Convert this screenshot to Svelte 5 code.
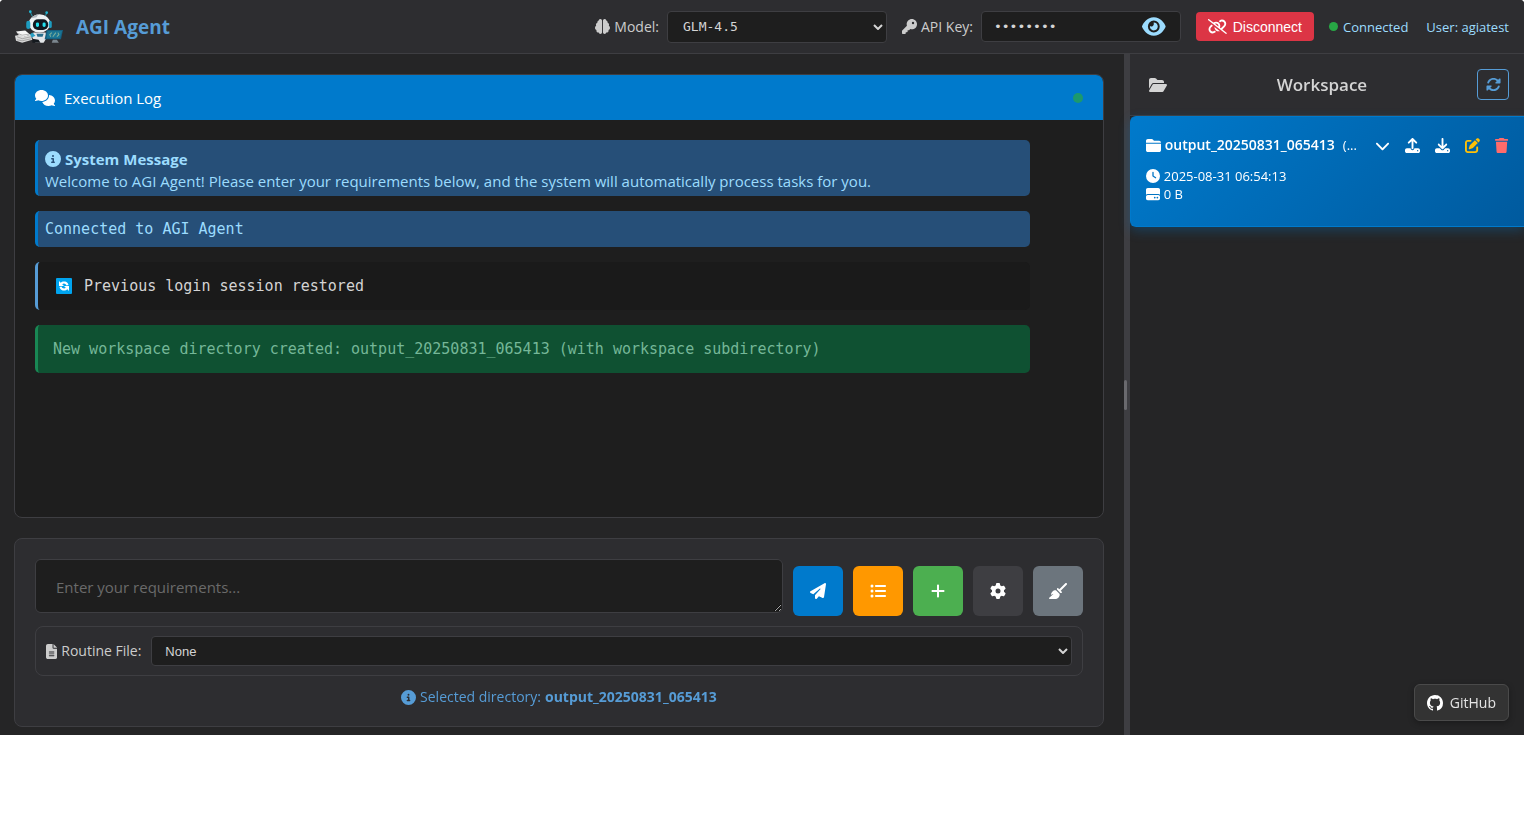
<script>
  const icons = {
    brain: [512, 'M184 0c30.9 0 56 25.1 56 56V456c0 30.9-25.1 56-56 56c-28.9 0-52.7-21.9-55.7-50.1c-5.2 1.4-10.7 2.1-16.3 2.1c-35.3 0-64-28.7-64-64c0-7.4 1.3-14.6 3.6-21.2C21.4 367.4 0 338.2 0 304c0-31.9 18.7-59.5 45.8-72.3C37.1 220.8 32 207 32 192c0-30.7 21.6-56.3 50.4-62.6C80.8 123.9 80 118 80 112c0-29.9 20.6-55.1 48.3-62.1C131.3 21.9 155.1 0 184 0zM328 0c28.9 0 52.6 21.9 55.7 49.9c27.8 7 48.3 32.1 48.3 62.1c0 6-.8 11.9-2.4 17.4c28.8 6.2 50.4 31.9 50.4 62.6c0 15-5.1 28.8-13.8 39.7C493.3 244.5 512 272.1 512 304c0 34.2-21.4 63.4-51.6 74.8c2.3 6.6 3.6 13.8 3.6 21.2c0 35.3-28.7 64-64 64c-5.6 0-11.1-.7-16.3-2.1c-3 28.2-26.8 50.1-55.7 50.1c-30.9 0-56-25.1-56-56V56c0-30.9 25.1-56 56-56z'],
    key: [512, 'M336 352c97.2 0 176-78.8 176-176S433.2 0 336 0S160 78.8 160 176c0 18.7 2.9 36.8 8.3 53.7L7 391c-4.5 4.5-7 10.6-7 17v80c0 13.3 10.7 24 24 24h80c13.3 0 24-10.7 24-24V448h40c13.3 0 24-10.7 24-24V384h40c6.4 0 12.5-2.5 17-7l33.3-33.3c16.9 5.4 35 8.3 53.7 8.3zM376 96a40 40 0 1 1 0 80 40 40 0 1 1 0-80z'],
    eye: [576, 'M288 32c-80.8 0-145.5 36.8-192.6 80.6C48.6 156 17.3 208 2.5 243.7c-3.3 7.9-3.3 16.7 0 24.6C17.3 304 48.6 356 95.4 399.4C142.5 443.2 207.2 480 288 480s145.5-36.8 192.6-80.6c46.8-43.5 78.1-95.4 93-131.1c3.3-7.9 3.3-16.7 0-24.6c-14.9-35.7-46.2-87.7-93-131.1C433.5 68.8 368.8 32 288 32zM144 256a144 144 0 1 1 288 0 144 144 0 1 1 -288 0zm144-64c0 35.3-28.7 64-64 64c-7.1 0-13.9-1.2-20.3-3.3c-5.5-1.8-11.9 1.6-11.7 7.4c.3 6.9 1.3 13.8 3.2 20.7c13.7 51.2 66.4 81.6 117.6 67.9s81.6-66.4 67.9-117.6c-11.1-41.5-47.8-69.4-88.6-71.1c-5.8-.2-9.2 6.1-7.4 11.7c2.1 6.4 3.3 13.2 3.3 20.3z'],
    unlink: [640, 'M38.8 5.1C28.4-3.1 13.3-1.2 5.1 9.2S-1.2 34.7 9.2 42.9l592 464c10.4 8.2 25.5 6.3 33.7-4.1s6.3-25.5-4.1-33.7L489.3 358.2l90.5-90.5c56.5-56.5 56.5-148 0-204.5c-50-50-128.8-56.5-186.3-15.4l-1.6 1.1c-14.4 10.3-17.7 30.3-7.4 44.6s30.3 17.7 44.6 7.4l1.6-1.1c32.1-22.9 76-19.3 103.8 8.6c31.5 31.5 31.5 82.5 0 114l-96 96-31.9-25C430.9 239.6 420.1 175.1 377 132c-52.2-52.3-134.5-56.2-191.3-11.7L38.8 5.1zM239 162c30.1-14.9 67.7-9.9 92.8 15.3c20 20 27.5 48.3 21.7 74.5L239 162zM406.6 416.4L220.9 270c-2.1 39.8 12.2 80.1 42.2 110c38.9 38.9 94.4 51 143.6 36.3zm-290-228.5L60.2 244.3c-56.5 56.5-56.5 148 0 204.5c50 50 128.8 56.5 186.3 15.4l1.6-1.1c14.4-10.3 17.7-30.3 7.4-44.6s-30.3-17.7-44.6-7.4l-1.6 1.1c-32.1 22.9-76 19.3-103.8-8.6C74 372 74 321 105.5 289.5l61.8-61.8-50.6-39.9z'],
    comments: [640, 'M208 352c114.9 0 208-78.8 208-176S322.9 0 208 0S0 78.8 0 176c0 38.6 14.7 74.3 39.6 103.4c-3.5 9.4-8.7 17.7-14.2 24.7c-4.8 6.2-9.7 11-13.3 14.3c-1.8 1.6-3.3 2.9-4.3 3.7c-.5 .4-.9 .7-1.1 .8l-.2 .2C1 327.2-1.4 334.4 .8 340.9S9.1 352 16 352c21.8 0 43.8-5.6 62.1-12.5c9.2-3.5 17.8-7.4 25.2-11.4C134.1 343.3 169.8 352 208 352zM448 176c0 112.3-99.1 196.9-216.5 207C255.8 457.4 336.4 512 432 512c38.2 0 73.9-8.7 104.7-23.9c7.5 4 16 7.9 25.2 11.4c18.3 6.9 40.3 12.5 62.1 12.5c6.9 0 13.1-4.5 15.2-11.1c2.1-6.6-.2-13.8-5.8-17.9l-.2-.2c-.2-.2-.6-.4-1.1-.8c-1-.8-2.5-2-4.3-3.7c-3.6-3.3-8.5-8.1-13.3-14.3c-5.5-7-10.7-15.4-14.2-24.7c24.9-29 39.6-64.7 39.6-103.4c0-92.8-84.9-168.9-192.6-175.5c.4 5.1 .6 10.3 .6 15.5z'],
    info: [512, 'M256 512A256 256 0 1 0 256 0a256 256 0 1 0 0 512zM216 336h24V272H216c-13.3 0-24-10.7-24-24s10.7-24 24-24h48c13.3 0 24 10.7 24 24v88h8c13.3 0 24 10.7 24 24s-10.7 24-24 24H216c-13.3 0-24-10.7-24-24s10.7-24 24-24zm40-208a32 32 0 1 1 0 64 32 32 0 1 1 0-64z'],
    plane: [512, 'M498.1 5.6c10.1 7 15.4 19.1 13.5 31.2l-64 416c-1.5 9.7-7.4 18.2-16 23s-18.9 5.4-28 1.6L284 427.7l-68.5 74.1c-8.9 9.7-22.9 12.9-35.2 8.1S160 493.2 160 480V396.4c0-4 1.5-7.8 4.2-10.7L331.8 202.8c5.8-6.3 5.6-16-.4-22s-15.7-6.4-22-.7L106 360.8 17.7 316.6C7.1 311.3 .3 300.7 0 288.9s5.9-22.8 16.1-28.7l448-256c10.7-6.1 23.9-5.5 34 1.4z'],
    list: [512, 'M64 144a48 48 0 1 0 0-96 48 48 0 1 0 0 96zM192 64c-17.7 0-32 14.3-32 32s14.3 32 32 32H480c17.7 0 32-14.3 32-32s-14.3-32-32-32H192zm0 160c-17.7 0-32 14.3-32 32s14.3 32 32 32H480c17.7 0 32-14.3 32-32s-14.3-32-32-32H192zm0 160c-17.7 0-32 14.3-32 32s14.3 32 32 32H480c17.7 0 32-14.3 32-32s-14.3-32-32-32H192zM64 464a48 48 0 1 0 0-96 48 48 0 1 0 0 96zm48-208a48 48 0 1 0 -96 0 48 48 0 1 0 96 0z'],
    plus: [448, 'M256 80c0-17.7-14.3-32-32-32s-32 14.3-32 32V224H48c-17.7 0-32 14.3-32 32s14.3 32 32 32H192V432c0 17.7 14.3 32 32 32s32-14.3 32-32V288H400c17.7 0 32-14.3 32-32s-14.3-32-32-32H256V80z'],
    gear: [512, 'M495.9 166.6c3.2 8.7 .5 18.4-6.4 24.6l-43.3 39.4c1.1 8.3 1.7 16.8 1.7 25.4s-.6 17.1-1.7 25.4l43.3 39.4c6.9 6.2 9.6 15.9 6.4 24.6c-4.4 11.9-9.7 23.3-15.8 34.3l-4.7 8.1c-6.6 11-14 21.4-22.1 31.2c-5.9 7.2-15.7 9.6-24.5 6.8l-55.7-17.7c-13.4 10.3-28.2 18.9-44 25.4l-12.5 57.1c-2 9.1-9 16.3-18.2 17.8c-13.8 2.3-28 3.5-42.5 3.5s-28.7-1.2-42.5-3.5c-9.2-1.5-16.2-8.7-18.2-17.8l-12.5-57.1c-15.8-6.5-30.6-15.1-44-25.4L83.1 425.9c-8.8 2.8-18.6 .3-24.5-6.8c-8.1-9.8-15.5-20.2-22.1-31.2l-4.7-8.1c-6.1-11-11.4-22.4-15.8-34.3c-3.2-8.7-.5-18.4 6.4-24.6l43.3-39.4C64.6 273.1 64 264.6 64 256s.6-17.1 1.7-25.4L22.4 191.2c-6.9-6.2-9.6-15.9-6.4-24.6c4.4-11.9 9.7-23.3 15.8-34.3l4.7-8.1c6.6-11 14-21.4 22.1-31.2c5.9-7.2 15.7-9.6 24.5-6.8l55.7 17.7c13.4-10.3 28.2-18.9 44-25.4l12.5-57.1c2-9.1 9-16.3 18.2-17.8C227.3 1.2 241.5 0 256 0s28.7 1.2 42.5 3.5c9.2 1.5 16.2 8.7 18.2 17.8l12.5 57.1c15.8 6.5 30.6 15.1 44 25.4l55.7-17.7c8.8-2.8 18.6-.3 24.5 6.8c8.1 9.8 15.5 20.2 22.1 31.2l4.7 8.1c6.1 11 11.4 22.4 15.8 34.3zM256 336a80 80 0 1 0 0-160 80 80 0 1 0 0 160z'],
    broom: [576, 'M566.6 54.6c12.5-12.5 12.5-32.8 0-45.3s-32.8-12.5-45.3 0l-192 192-34.7-34.7c-4.2-4.2-10-6.6-16-6.6c-12.5 0-22.6 10.1-22.6 22.6v29.1L364.3 320h29.1c12.5 0 22.6-10.1 22.6-22.6c0-6-2.4-11.8-6.6-16l-34.7-34.7 192-192zM341.1 353.4L222.6 234.9c-42.7-3.7-85.2 11.7-115.8 42.3l-8 8C76.5 307.5 64 337.7 64 369.2c0 6.8 7.1 11.2 13.2 8.2l51.1-25.5c5-2.5 9.5 4.1 5.4 7.9L7.3 473.4C2.7 477.6 0 483.6 0 489.9C0 502.1 9.9 512 22.1 512l173.3 0c38.8 0 75.9-15.4 103.4-42.8c30.6-30.6 45.9-73.1 42.3-115.8z'],
    file: [384, 'M64 0C28.7 0 0 28.7 0 64V448c0 35.3 28.7 64 64 64H320c35.3 0 64-28.7 64-64V160H256c-17.7 0-32-14.3-32-32V0H64zM256 0V128H384L256 0zM112 256H272c8.8 0 16 7.2 16 16s-7.2 16-16 16H112c-8.8 0-16-7.2-16-16s7.2-16 16-16zm0 64H272c8.8 0 16 7.2 16 16s-7.2 16-16 16H112c-8.8 0-16-7.2-16-16s7.2-16 16-16zm0 64H272c8.8 0 16 7.2 16 16s-7.2 16-16 16H112c-8.8 0-16-7.2-16-16s7.2-16 16-16z'],
    folderOpen: [576, 'M88.7 223.8L0 375.8V96C0 60.7 28.7 32 64 32H181.5c17 0 33.3 6.7 45.3 18.7l26.5 26.5c12 12 28.3 18.7 45.3 18.7H416c35.3 0 64 28.7 64 64v32H144c-22.8 0-43.8 12.1-55.3 31.8zm27.6 16.1C122.1 230 132.6 224 144 224H544c11.5 0 22 6.1 27.7 16.1s5.7 22.2-.1 32.1l-112 192C453.9 474 443.4 480 432 480H32c-11.5 0-22-6.1-27.7-16.1s-5.7-22.2 .1-32.1l112-192z'],
    folder: [512, 'M448 480H64c-35.3 0-64-28.7-64-64V192H512V416c0 35.3-28.7 64-64 64zm64-320H0V96C0 60.7 28.7 32 64 32H192c20.1 0 39.1 9.5 51.2 25.6l19.2 25.6c6 8.1 15.5 12.8 25.6 12.8H448c35.3 0 64 28.7 64 64z'],
    rotate: [512, 'M142.9 142.9c62.2-62.2 162.7-62.5 225.3-1L327 183c-6.9 6.9-8.9 17.2-5.2 26.2s12.5 14.8 22.2 14.8H472c13.3 0 24-10.7 24-24V72c0-9.7-5.8-18.5-14.8-22.2s-19.3-1.7-26.2 5.2L413.4 96.6c-87.6-86.5-228.7-86.2-315.8 1C73.2 122 55.6 150.7 44.8 181.4c-5.9 16.7 2.9 34.9 19.5 40.8s34.9-2.9 40.8-19.5c7.7-21.8 20.2-42.3 37.8-59.8zM16 312V440c0 9.7 5.8 18.5 14.8 22.2s19.3 1.7 26.2-5.2l41.6-41.6c87.6 86.5 228.7 86.2 315.8-1c24.4-24.4 42.1-53.1 52.9-83.7c5.9-16.7-2.9-34.9-19.5-40.8s-34.9 2.9-40.8 19.5c-7.7 21.8-20.2 42.3-37.8 59.8c-62.2 62.2-162.7 62.5-225.3 1L185 329c6.9-6.9 8.9-17.2 5.2-26.2s-12.5-14.8-22.2-14.8H40c-13.3 0-24 10.7-24 24z'],
    clock: [512, 'M256 0a256 256 0 1 1 0 512A256 256 0 1 1 256 0zM232 120V256c0 8 4 15.5 10.7 20l96 64c11 7.4 25.9 4.4 33.3-6.7s4.4-25.9-6.7-33.3L280 243.2V120c0-13.3-10.7-24-24-24s-24 10.7-24 24z'],
    drive: [512, 'M0 96C0 60.7 28.7 32 64 32H448c35.3 0 64 28.7 64 64V280.4c-17-15.2-39.4-24.4-64-24.4H64c-24.6 0-47 9.2-64 24.4V96zM64 288H448c35.3 0 64 28.7 64 64v64c0 35.3-28.7 64-64 64H64c-35.3 0-64-28.7-64-64V352c0-35.3 28.7-64 64-64zM320 416a32 32 0 1 0 0-64 32 32 0 1 0 0 64zm128-32a32 32 0 1 0 -64 0 32 32 0 1 0 64 0z'],
    chevron: [512, 'M233.4 406.6c12.5 12.5 32.8 12.5 45.3 0l192-192c12.5-12.5 12.5-32.8 0-45.3s-32.8-12.5-45.3 0L256 338.7 86.6 169.4c-12.5-12.5-32.8-12.5-45.3 0s-12.5 32.8 0 45.3l192 192z'],
    upload: [512, 'M288 109.3V352c0 17.7-14.3 32-32 32s-32-14.3-32-32V109.3l-73.4 73.4c-12.5 12.5-32.8 12.5-45.3 0s-12.5-32.8 0-45.3l128-128c12.5-12.5 32.8-12.5 45.3 0l128 128c12.5 12.5 12.5 32.8 0 45.3s-32.8 12.5-45.3 0L288 109.3zM64 352H192c0 35.3 28.7 64 64 64s64-28.7 64-64H448c35.3 0 64 28.7 64 64v32c0 35.3-28.7 64-64 64H64c-35.3 0-64-28.7-64-64V416c0-35.3 28.7-64 64-64zM432 456a24 24 0 1 0 0-48 24 24 0 1 0 0 48z'],
    download: [512, 'M288 32c0-17.7-14.3-32-32-32s-32 14.3-32 32V274.7l-73.4-73.4c-12.5-12.5-32.8-12.5-45.3 0s-12.5 32.8 0 45.3l128 128c12.5 12.5 32.8 12.5 45.3 0l128-128c12.5-12.5 12.5-32.8 0-45.3s-32.8-12.5-45.3 0L288 274.7V32zM64 352c-35.3 0-64 28.7-64 64v32c0 35.3 28.7 64 64 64H448c35.3 0 64-28.7 64-64V416c0-35.3-28.7-64-64-64H346.5l-45.3 45.3c-25 25-65.5 25-90.5 0L165.5 352H64zm368 56a24 24 0 1 1 0 48 24 24 0 1 1 0-48z'],
    edit: [512, 'M471.6 21.7c-21.9-21.9-57.3-21.9-79.2 0L362.3 51.7l97.9 97.9 30.1-30.1c21.9-21.9 21.9-57.3 0-79.2L471.6 21.7zm-299.2 220c-6.1 6.1-10.8 13.6-13.5 21.9l-29.6 88.8c-2.9 8.6-.6 18.1 5.8 24.6s15.9 8.7 24.6 5.8l88.8-29.6c8.2-2.7 15.7-7.4 21.9-13.5L437.7 172.3 339.7 74.3 172.4 241.7zM96 64C43 64 0 107 0 160V416c0 53 43 96 96 96H352c53 0 96-43 96-96V320c0-17.7-14.3-32-32-32s-32 14.3-32 32v96c0 17.7-14.3 32-32 32H96c-17.7 0-32-14.3-32-32V160c0-17.7 14.3-32 32-32h96c17.7 0 32-14.3 32-32s-14.3-32-32-32H96z'],
    trash: [448, 'M135.2 17.7L128 32H32C14.3 32 0 46.3 0 64S14.3 96 32 96H416c17.7 0 32-14.3 32-32s-14.3-32-32-32H320l-7.2-14.3C307.4 6.8 296.3 0 284.2 0H163.8c-12.1 0-23.2 6.8-28.6 17.7zM416 128H32L53.2 467c1.6 25.3 22.6 45 47.9 45H346.9c25.3 0 46.3-19.7 47.9-45L416 128z']
  };

  const actions = [
    { icon: 'plane', label: 'Send', tone: 'blue' },
    { icon: 'list', label: 'Plan', tone: 'orange' },
    { icon: 'plus', label: 'New directory', tone: 'green' },
    { icon: 'gear', label: 'Settings', tone: 'dark' },
    { icon: 'broom', label: 'Clear', tone: 'grey' }
  ];

  const folderActions = [
    { icon: 'chevron', label: 'Expand', tone: '' },
    { icon: 'upload', label: 'Upload', tone: '' },
    { icon: 'download', label: 'Download', tone: '' },
    { icon: 'edit', label: 'Rename', tone: 'amber' },
    { icon: 'trash', label: 'Delete', tone: 'red' }
  ];

  let model = $state('GLM-4.5');
  let apiKey = $state('password');
  let keyVisible = $state(false);
  let routine = $state('None');
  let directory = $state('output_20250831_065413');
</script>

{#snippet icon(name, size = 'm')}
  <svg class="icon {size}" viewBox="0 0 {icons[name][0]} 512" aria-hidden="true"><path fill-rule="evenodd" d={icons[name][1]} /></svg>
{/snippet}

{#snippet caret()}
  <svg class="caret" viewBox="0 0 10 6" aria-hidden="true"><path d="M1 1l4 4 4-4" /></svg>
{/snippet}

<div class="app">
  <header class="topbar">
    <div class="brand">
      <svg class="logo" viewBox="0 0 47 33" aria-hidden="true">
        <path d="M15 2l2 4M31 3l-2 4" stroke="#2b8aa0" stroke-width="1" />
        <circle cx="15" cy="1.500" r="1.300" fill="#22b8d4" />
        <circle cx="31" cy="2.500" r="1.300" fill="#22b8d4" />
        <ellipse cx="24" cy="13" rx="10.500" ry="9" fill="#eef1f3" />
        <path d="M16 8a10 7 0 0 1 7-4l-2 3z" fill="#aeb6bd" />
        <rect x="11" y="10.500" width="4" height="8" rx="2" fill="#1d9cc0" />
        <rect x="33" y="10.500" width="3" height="7" rx="1.500" fill="#1d9cc0" />
        <rect x="17.500" y="9" width="15" height="10.500" rx="5" fill="#111820" />
        <rect x="20.500" y="12" width="3" height="4.500" rx="1.400" fill="#23e0ee" />
        <rect x="27" y="12" width="3" height="4.500" rx="1.400" fill="#23e0ee" />
        <path d="M18 22h12l1 5-3 5h-8l-3-5z" fill="#e3e6e9" />
        <path d="M21 23h7l-1 3h-5z" fill="#2a6e8c" />
        <path d="M17 22l-4 3 3 2 4-2z" fill="#2aa0c4" />
        <path d="M17 28l6 1 2 3h-8z" fill="#14191e" />
        <path d="M1 21l9-1 5 4-9 3z" fill="#f5f5f5" />
        <path d="M0 25l5-1 3 2 7-2 2 5-10 3-6-2z" fill="#d9d9d9" />
        <path d="M2 22.500l5 2 7-1M2 26l5 2 9-2M2 29l5 1 9-2" stroke="#888" stroke-width=".6" fill="none" />
        <path d="M31 19.500h16l-2 9H29z" fill="#155f80" />
        <path d="M32 20.500h14l-2 7H31z" fill="#1a7594" />
        <path d="M36 22l-2 2 1 2M42 22l1 2-2 2M40 22l-3 4" stroke="#7fae9a" stroke-width="1" fill="none" />
        <path d="M37 29h4l2 3h-7z" fill="#7b868e" />
      </svg>
      <h1>AGI Agent</h1>
    </div>

    <div class="controls">
      <div class="field">
        <label for="model">{@render icon('brain', 's')} Model:</label>
        <div class="select model">
          <select id="model" bind:value={model}><option>GLM-4.5</option></select>
          {@render caret()}
        </div>
      </div>
      <div class="field">
        <label for="key">{@render icon('key', 's')} API Key:</label>
        <div class="secret">
          <input id="key" type={keyVisible ? 'text' : 'password'} bind:value={apiKey} />
          <button aria-label="Show key" onclick={() => (keyVisible = !keyVisible)}>{@render icon('eye', 'xl')}</button>
        </div>
      </div>
      <button class="disconnect">{@render icon('unlink', 's')} Disconnect</button>
      <div class="session">
        <span class="status"><i></i>Connected</span>
        <span>User: agiatest</span>
      </div>
    </div>
  </header>

  <div class="body">
    <main>
      <section class="log">
        <h2>{@render icon('comments')} Execution Log <i></i></h2>
        <div class="messages">
          <div class="msg system">
            <strong>{@render icon('info')} System Message</strong>
            <p>Welcome to AGI Agent! Please enter your requirements below, and the system will automatically process tasks for you.</p>
          </div>
          <div class="msg system mono">Connected to AGI Agent</div>
          <div class="msg plain mono">
            <svg class="emoji" viewBox="0 0 16 16" aria-hidden="true">
              <rect width="16" height="16" rx="1" fill="#00a4ef" />
              <path d="M3 8V3l1.700 1.700a4.700 4.700 0 0 1 7.800 2.300l-2 .6a2.600 2.600 0 0 0-4.300-1.400L8 8zM13 8v5l-1.700-1.700a4.700 4.700 0 0 1-7.800-2.300l2-.6a2.600 2.600 0 0 0 4.300 1.400L8 8z" fill="#fff" />
            </svg>
            Previous login session restored
          </div>
          <div class="msg success mono">New workspace directory created: output_20250831_065413 (with workspace subdirectory)</div>
        </div>
      </section>

      <section class="composer">
        <div class="entry">
          <textarea aria-label="Requirements" placeholder="Enter your requirements..."></textarea>
          {#each actions as a}
            <button class="action {a.tone}" aria-label={a.label}>{@render icon(a.icon)}</button>
          {/each}
        </div>
        <div class="routine">
          <label for="routine">{@render icon('file', 's')} Routine File:</label>
          <div class="select">
            <select id="routine" bind:value={routine}><option>None</option></select>
            {@render caret()}
          </div>
        </div>
        <p class="selected">{@render icon('info', 's')} Selected directory: <strong>{directory}</strong></p>
      </section>
    </main>

    <div class="resizer"><i></i></div>

    <aside>
      <div class="side-head">
        {@render icon('folderOpen')}
        <h2>Workspace</h2>
        <button aria-label="Refresh">{@render icon('rotate', 's')}</button>
      </div>
      <article class="folder">
        <div class="folder-top">
          {@render icon('folder', 's')}
          <strong>{directory}</strong>
          <span class="more">(...</span>
          <div class="tools">
            {#each folderActions as a}
              <button class={a.tone} aria-label={a.label}>{@render icon(a.icon, 's')}</button>
            {/each}
          </div>
        </div>
        <div class="meta">{@render icon('clock', 'xs')} 2025-08-31 06:54:13</div>
        <div class="meta">{@render icon('drive', 'xs')} 0 B</div>
      </article>
      <a class="github" href="#github">
        <svg viewBox="0 0 16 16" aria-hidden="true"><path d="M8 0C3.580 0 0 3.580 0 8c0 3.540 2.290 6.530 5.470 7.590.4.070.55-.17.55-.38 0-.19-.01-.82-.01-1.490-2.010.37-2.530-.49-2.690-.94-.09-.23-.48-.94-.82-1.130-.28-.15-.68-.52-.01-.53.63-.01 1.080.58 1.230.82.72 1.210 1.870.87 2.330.66.07-.52.28-.87.51-1.070-1.780-.2-3.640-.89-3.640-3.950 0-.87.31-1.590.82-2.150-.08-.2-.36-1.020.08-2.120 0 0 .67-.21 2.200.82.64-.18 1.320-.27 2-.27s1.360.09 2 .27c1.530-1.040 2.200-.82 2.200-.82.44 1.100.16 1.920.08 2.120.51.56.82 1.270.82 2.150 0 3.070-1.870 3.750-3.650 3.950.29.25.54.73.54 1.480 0 1.070-.01 1.930-.01 2.200 0 .21.15.46.55.38A8.010 8.010 0 0 0 16 8c0-4.420-3.580-8-8-8Z" /></svg>
        GitHub
      </a>
    </aside>
  </div>
</div>

<style>
  :global(body) { background: #fff; }
  * { box-sizing: border-box; }
  h1, h2, p { margin: 0; }
  button { font: inherit; color: inherit; border: 0; padding: 0; background: none; cursor: pointer; }
  button, label, .status { display: flex; align-items: center; }

  .app {
    display: flex;
    flex-direction: column;
    min-height: calc(100vh - 84px);
    overflow: hidden;
    border-radius: 4px 4px 0 0;
    background: #252526;
    color: #d4d4d4;
    font: 15px/20px "Open Sans", "Noto Sans", sans-serif;
  }

  .icon { height: 16px; width: auto; flex: none; fill: currentColor; }
  .icon.xs { height: 14px; }
  .icon.s { height: 15px; }
  .icon.xl { height: 21px; }

  .topbar {
    display: flex;
    align-items: center;
    justify-content: space-between;
    height: 54px;
    padding: 0 15px;
    background: #2d2d30;
    border-bottom: 1px solid #3e3e42;
  }
  .brand { display: flex; align-items: center; gap: 13px; }
  .logo { width: 48px; height: 34px; }
  h1 { font-size: 19px; line-height: 24px; font-weight: 700; color: #569cd6; }
  .controls { display: flex; align-items: center; gap: 15px; }
  .field { display: flex; align-items: center; gap: 8px; }
  label { gap: 4px; color: #ccc; font-size: 14px; white-space: nowrap; }

  .select { display: grid; align-items: center; flex: 1; }
  .select > :global(*) { grid-area: 1 / 1; }
  select {
    appearance: none;
    width: 100%;
    height: 30px;
    padding: 0 13px;
    border: 1px solid #3e3e42;
    border-radius: 4px;
    background: #1e1e1e;
    color: #d4d4d4;
    font: 13px "Liberation Sans", Arial, sans-serif;
  }
  .model { width: 220px; flex: none; }
  .model select { height: 32px; padding: 0 15px; font: 13px "DejaVu Sans Mono", monospace; }
  .caret { justify-self: end; width: 10px; height: 6px; margin-right: 4px; fill: none; stroke: #d4d4d4; stroke-width: 2; pointer-events: none; }

  .secret {
    display: flex;
    align-items: center;
    width: 200px;
    height: 31px;
    padding: 0 14px 0 12px;
    border: 1px solid #3e3e42;
    border-radius: 4px;
    background: #1e1e1e;
  }
  .secret input { flex: 1; min-width: 0; padding: 0; border: 0; outline: 0; background: none; color: #d4d4d4; font: 13px "DejaVu Sans Mono", monospace; }
  .secret button { color: #9cdcfe; }

  .disconnect {
    gap: 6px;
    height: 29px;
    padding: 0 12px;
    border-radius: 4px;
    background: #dc3545;
    color: #fff;
    font: 14px "Liberation Sans", Arial, sans-serif;
  }
  .session { display: flex; align-items: center; gap: 18px; color: #9cdcfe; font-size: 13px; }
  .status { gap: 5px; }
  .status i { width: 9px; height: 9px; border-radius: 50%; background: #28a745; }

  .body { flex: 1; display: flex; }
  main { flex: 1; min-width: 0; display: flex; flex-direction: column; gap: 20px; padding: 20px 20px 8px 14px; }
  .log, .composer { border: 1px solid #3e3e42; border-radius: 8px; }
  .log { flex: 1; background: #1e1e1e; overflow: hidden; }
  .log h2 {
    display: flex;
    align-items: center;
    gap: 9px;
    height: 45px;
    padding: 0 20px;
    background: #007acc;
    color: #fff;
    font-size: 15px;
    font-weight: 400;
  }
  .log h2 i { width: 10px; height: 10px; margin-left: auto; border-radius: 50%; background: #28a745; opacity: .7; }
  .messages { display: flex; flex-direction: column; gap: 15px; padding: 20px; }
  .msg { width: 95%; border-left: 3px solid #007acc; border-radius: 5px; padding: 7px; line-height: 22px; }
  .msg strong { display: flex; align-items: center; gap: 4px; }
  .msg:has(strong) { padding: 8px 7px 4px; }
  .mono { font-family: "DejaVu Sans Mono", monospace; font-size: 15px; }
  .system { background: #264f78; color: #9cdcfe; }
  .plain { display: flex; align-items: center; gap: 12px; padding: 13px 18px; border-color: #569cd6; background: #1a1a1a; }
  .emoji { width: 16px; height: 16px; flex: none; }
  .success { padding: 13px 15px; border-color: #198754; background: #0f5132; color: #75b798; }

  .composer { padding: 20px 20px 10px; background: #2d2d30; }
  .entry { display: flex; align-items: flex-end; gap: 10px; }
  textarea {
    flex: 1;
    min-width: 0;
    height: 54px;
    margin-bottom: 3px;
    padding: 16px 20px;
    border: 1px solid #3e3e42;
    border-radius: 6px;
    outline: 0;
    background: #1e1e1e;
    color: #d4d4d4;
    font: 15px/22px "Open Sans", "Noto Sans", sans-serif;
  }
  textarea::placeholder { color: #6a6a6a; }
  .action { width: 50px; height: 50px; justify-content: center; border-radius: 6px; color: #fff; }
  .blue { background: #007acc; }
  .orange { background: #ff9800; }
  .green { background: #4caf50; }
  .dark { background: #3e3e42; }
  .grey { background: #6c757d; }

  .routine { display: flex; align-items: center; gap: 10px; margin-top: 10px; padding: 9px 10px; border: 1px solid #3e3e42; border-radius: 8px; }
  .selected { display: flex; align-items: center; justify-content: center; gap: 4px; padding: 11px 0 9px; color: #569cd6; font-size: 14px; }

  .resizer { width: 6px; display: flex; align-items: center; background: #3e3e42; }
  .resizer i { width: 3px; height: 30px; border-radius: 2px; background: #6a6a6e; }

  aside { width: calc(26% - 2px); display: flex; flex-direction: column; }
  .side-head { display: flex; align-items: center; justify-content: space-between; height: 62px; padding: 0 15px 0 19px; background: #2d2d30; border-bottom: 1px solid #3e3e42; }
  .side-head h2 { font-size: 17px; font-weight: 600; }
  .side-head button { width: 32px; height: 31px; justify-content: center; border: 1px solid #569cd6; border-radius: 4px; color: #569cd6; }
  .folder {
    padding: 17px 7px 23px 15px;
    border: 1px solid #007acc;
    border-right: 0;
    border-radius: 6px 0 0 6px;
    background: linear-gradient(135deg, #007acc, #005a9e);
    box-shadow: 0 4px 12px rgba(0, 122, 204, .3);
    color: #fff;
  }
  .folder-top { display: flex; align-items: center; gap: 4px; margin-bottom: 11px; font-size: 14px; line-height: 22px; }
  .folder-top strong { font-weight: 600; }
  .more { margin-left: 4px; font-size: 13px; }
  .tools { display: flex; margin-left: auto; }
  .tools button { width: 30px; justify-content: center; }
  .amber { color: #ffc107; }
  .red { color: #ff6b6b; }
  .meta { display: flex; align-items: center; gap: 4px; font-size: 13px; line-height: 18px; }
  .github {
    display: flex;
    align-items: center;
    align-self: flex-end;
    gap: 7px;
    height: 37px;
    margin: auto 15px 14px;
    padding: 0 12px;
    border: 1px solid #4a4a4a;
    border-radius: 6px;
    background: #333;
    box-shadow: 0 2px 6px rgba(0, 0, 0, .3);
    color: #e4e4e4;
    font-size: 14px;
    text-decoration: none;
  }
  .github svg { width: 16px; height: 16px; fill: #fff; }
</style>
